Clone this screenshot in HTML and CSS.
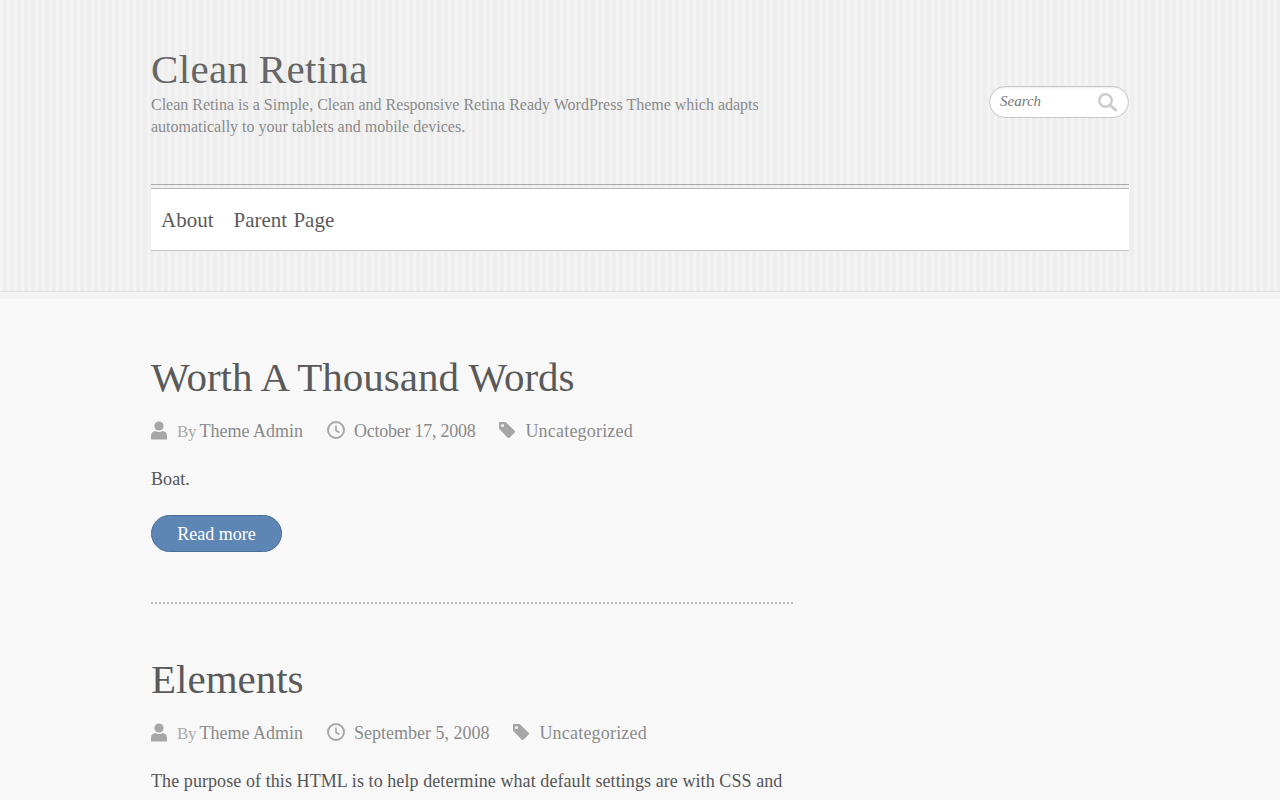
FILE: index.html
```html
<!DOCTYPE html>
<html lang="en">
<head>
<meta charset="utf-8">
<title>Clean Retina</title>
<link rel="stylesheet" href="styles.css">
</head>
<body>
<header class="site-header">
  <div class="wrap">
    <div class="branding">
      <div class="brand-text">
        <h1 class="site-title">Clean Retina</h1>
        <p class="site-desc">Clean Retina is a Simple, Clean and Responsive Retina Ready WordPress Theme which adapts automatically to your tablets and mobile devices.</p>
      </div>
      <form class="search">
        <span class="search-label">Search</span>
        <svg class="search-icon" viewBox="0 0 20 20" width="20" height="20"><circle cx="8.500" cy="8.500" r="6.300" fill="none" stroke="#ccc" stroke-width="2.400"/><path d="M13 13l5.500 5" stroke="#ccc" stroke-width="3" stroke-linecap="round"/></svg>
      </form>
    </div>
    <nav class="main-nav">
      <a class="nav-link">About</a>
      <a class="nav-link">Parent Page</a>
    </nav>
  </div>
</header>
<main class="wrap content">
  <article class="post">
    <h2 class="post-title">Worth A Thousand Words</h2>
    <div class="meta">
      <span class="meta-item"><svg class="ico user" viewBox="0 0 16 19" width="16" height="19"><circle cx="8" cy="5" r="4.600" fill="#a6a6a6"/><path d="M0 18.500v-3.800C0 11.800 2.300 10.200 4.300 10c2.200 1.400 5.200 1.400 7.400 0 2 .2 4.300 1.800 4.300 4.700v3.800z" fill="#a6a6a6"/></svg><span><span class="by">By</span> <a class="meta-link">Theme Admin</a></span></span>
      <span class="meta-item"><svg class="ico clock" viewBox="0 0 18 18" width="18" height="18"><circle cx="9" cy="9" r="8" fill="none" stroke="#a6a6a6" stroke-width="2"/><path d="M9 4.500v5l3.500 2" fill="none" stroke="#a6a6a6" stroke-width="1.600"/></svg><a class="meta-link date">October 17, 2008</a></span>
      <span class="meta-item"><svg class="ico tag" viewBox="0 0 16 16" width="16" height="16"><path fill-rule="evenodd" d="M0 0h6.600L15.700 8.800a1.200 1.200 0 0 1 0 1.700L10.400 15.700a1.200 1.200 0 0 1-1.700 0L0 6.800zM3.500 2a1.500 1.500 0 1 0 0 3 1.500 1.500 0 0 0 0-3z" fill="#a6a6a6"/></svg><a class="meta-link cat">Uncategorized</a></span>
    </div>
    <p class="post-text">Boat.</p>
    <a class="read-more">Read more</a>
  </article>
  <article class="post second">
    <h2 class="post-title">Elements</h2>
    <div class="meta">
      <span class="meta-item"><svg class="ico user" viewBox="0 0 16 19" width="16" height="19"><circle cx="8" cy="5" r="4.600" fill="#a6a6a6"/><path d="M0 18.500v-3.800C0 11.800 2.300 10.200 4.300 10c2.200 1.400 5.200 1.400 7.400 0 2 .2 4.300 1.800 4.300 4.700v3.800z" fill="#a6a6a6"/></svg><span><span class="by">By</span> <a class="meta-link">Theme Admin</a></span></span>
      <span class="meta-item"><svg class="ico clock" viewBox="0 0 18 18" width="18" height="18"><circle cx="9" cy="9" r="8" fill="none" stroke="#a6a6a6" stroke-width="2"/><path d="M9 4.500v5l3.500 2" fill="none" stroke="#a6a6a6" stroke-width="1.600"/></svg><a class="meta-link">September 5, 2008</a></span>
      <span class="meta-item"><svg class="ico tag" viewBox="0 0 16 16" width="16" height="16"><path fill-rule="evenodd" d="M0 0h6.600L15.700 8.800a1.200 1.200 0 0 1 0 1.700L10.400 15.700a1.200 1.200 0 0 1-1.700 0L0 6.800zM3.500 2a1.500 1.500 0 1 0 0 3 1.500 1.500 0 0 0 0-3z" fill="#a6a6a6"/></svg><a class="meta-link cat">Uncategorized</a></span>
    </div>
    <p class="post-text">The purpose of this HTML is to help determine what default settings are with CSS and to make sure that all possible HTML Elements are included in this HTML so that as CSS is styled.</p>
  </article>
</main>
</body>
</html>
```
FILE: styles.css
```css
* { box-sizing: border-box; }
html, body { margin: 0; padding: 0; }
body {
  background: #f8f8f8;
  color: #555;
  font-family: "Liberation Serif", serif;
  height: 800px;
  overflow: hidden;
}
.wrap { width: 978px; margin: 0 auto; }
.site-header {
  height: 299px;
  padding-top: 46px;
  border-bottom: 7px solid #f3f3f3;
  background: repeating-linear-gradient(90deg, #f3f3f3 0, #f3f3f3 3px, #eeeeee 3px, #eeeeee 7px);
  position: relative;
}
.site-header::after {
  content: "";
  position: absolute;
  left: 0; right: 0; bottom: 0;
  height: 1px;
  background: #dcdcdc;
}
.branding { display: flex; justify-content: space-between; align-items: flex-start; height: 92px; }
.brand-text { width: 642px; }
.site-title {
  margin: 0;
  font-size: 41px;
  line-height: 46px;
  font-weight: 400;
  color: #666;
  letter-spacing: 0.33px;
}
.site-desc {
  margin: 2px 0 0;
  font-size: 16px;
  line-height: 22px;
  color: #8a8a8a;
}
.search {
  width: 140px;
  height: 32px;
  margin-top: 40px;
  border: 1px solid #c8c8c8;
  border-radius: 16px;
  background: #fff;
  display: flex;
  align-items: center;
  justify-content: space-between;
  padding: 0 11px 0 10px;
  box-shadow: inset 0 1px 2px rgba(0,0,0,.08);
}
.search-label { font-style: italic; font-size: 15px; color: #777; margin-top: -2px; }
.search-icon { display: block; }
.main-nav {
  position: relative;
  display: flex;
  align-items: center;
  gap: 20px;
  margin-top: 50px;
  height: 63px;
  padding: 2px 10px 0;
  background: #fff;
  border-top: 1px solid #b5b5b5;
  border-bottom: 1px solid #c4c4c4;
}
.main-nav::before {
  content: "";
  position: absolute;
  left: 0; right: 0; top: -5px;
  height: 1px;
  background: #aaa;
}
.nav-link { font-size: 21px; color: #5a5a5a; word-spacing: 1px; }
.post { width: 642px; padding-top: 52px; border-bottom: 2px dotted #bbb; height: 305px; }
.post.second { border: 0; padding-top: 49px; height: auto; }
.post-title {
  margin: 0;
  font-size: 41px;
  line-height: 52px;
  font-weight: 400;
  color: #5a5a5a;
}
.meta { display: flex; gap: 24px; margin-top: 16px; height: 24px; align-items: center; font-size: 18px; color: #999; }
.meta-item { display: flex; align-items: center; white-space: pre; }
.ico { display: block; margin-top: -2px; }
.user { margin-right: 10px; }
.clock { margin-right: 9px; }
.tag { margin-right: 10px; }
.by { color: #aaa; font-size: 17px; letter-spacing: -0.3px; margin-right: -1px; }
.meta-link { color: #8a8a8a; }
.date { letter-spacing: -0.25px; }
.cat { letter-spacing: 0.2px; }
.post-text { margin: 23px 0 0; font-size: 18px; line-height: 26px; color: #555; letter-spacing: 0.08px; }
.read-more {
  display: inline-block;
  margin-top: 23px;
  width: 131px;
  height: 37px;
  line-height: 36px;
  text-align: center;
  border-radius: 19px;
  background: #5e86b4;
  border: 1px solid #4a6f96;
  color: #fff;
  font-size: 18px;
}
```
